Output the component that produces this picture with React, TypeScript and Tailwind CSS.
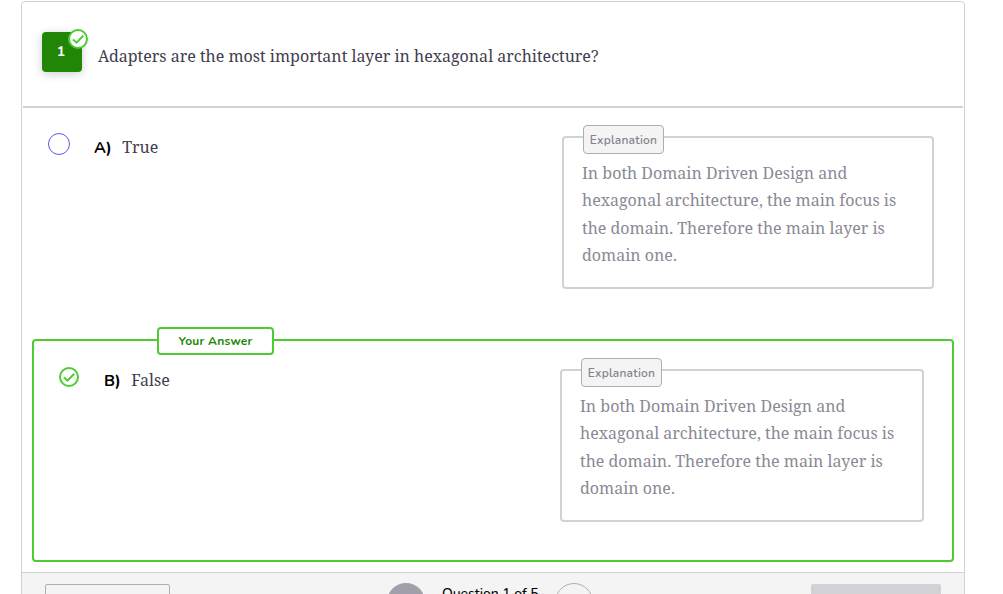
import React from "react";

const serif = "font-['Noto_Serif','DejaVu_Serif_Condensed','DejaVu_Serif',serif]";
const sans = "font-['Nunito','Noto_Sans',sans-serif]";

const explanationLines = [
  "In both Domain Driven Design and",
  "hexagonal architecture, the main focus is",
  "the domain. Therefore the main layer is",
  "domain one.",
];

function CheckCircle({ className }: { className: string }) {
  return (
    <svg viewBox="0 0 20 20" className={className} fill="none" stroke="#4dcb30">
      <circle cx="10" cy="10" r="9" fill="#fff" strokeWidth="2" />
      <path d="M5 10.6 8.5 13.7 15.2 6.8" strokeWidth="2" />
    </svg>
  );
}

function Explanation({ className }: { className: string }) {
  return (
    <div className={`relative h-[153px] shrink-0 rounded-[4px] border-2 border-[#d1d1d6] pt-[22px] pl-[18px] ${className}`}>
      <div className={`absolute -top-[13px] left-[19px] flex h-[29px] w-[81px] items-center justify-center rounded-[4px] border border-[#aeaeb2] bg-[#f4f4f4] text-[12px] leading-[18px] font-semibold tracking-[0.2px] whitespace-nowrap text-[#84828e] ${sans}`}>
        Explanation
      </div>
      {explanationLines.map((line) => (
        <p key={line} className={`text-[16px] leading-[27.3px] whitespace-nowrap text-[#8b8995] ${serif}`}>
          {line}
        </p>
      ))}
    </div>
  );
}

export default function App() {
  return (
    <div className="h-[594px] overflow-hidden bg-white pt-px pl-[21px]">
      <main className="h-[620px] w-[944px] rounded-[4px] border border-[#d1d1d6]">
        <header className="mx-px flex h-[106px] border-b-2 border-[#d1d1d6] pt-[30px] pl-[19px]">
          <div className={`relative flex h-10 w-10 shrink-0 items-center justify-center rounded-[4px] bg-[#218605] pr-[2px] text-[14px] leading-[20px] font-bold text-white shadow-[0_2px_10px_rgba(0,0,0,0.2)] ${sans}`}>
            1
            <CheckCircle className="absolute -top-[3px] left-[26px] h-5 w-5" />
          </div>
          <h1 className={`mt-[12px] ml-4 text-[16px] leading-6 font-normal whitespace-nowrap text-[#3f3d4e] ${serif}`}>
            Adapters are the most important layer in hexagonal architecture?
          </h1>
        </header>

        <section className="flex h-[231px] pt-[28px] pr-[30px] pl-[26px]">
          <div className="-mt-[3px] h-[22px] w-[22px] shrink-0 rounded-full border border-[#5b57f5]" />
          <span className={`ml-6 text-[16px] leading-6 font-bold text-black ${sans}`}>A)</span>
          <span className={`-mt-px ml-[10.5px] text-[16px] leading-6 text-[#3f3d4e] ${serif}`}>True</span>
          <Explanation className="ml-auto w-[372px]" />
        </section>

        <section className="relative mx-[10px] flex h-[223px] rounded-[4px] border-2 border-[#4dcb30] pt-[28px] pr-7 pl-[25px]">
          <div className={`absolute -top-[14px] left-[123px] flex h-7 w-[117px] items-center justify-center rounded-[4px] border-2 border-[#4dcb30] bg-white text-[12px] leading-[18px] font-bold tracking-[0.25px] text-[#218605] ${sans}`}>
            Your Answer
          </div>
          <CheckCircle className="-mt-[2px] h-5 w-5 shrink-0" />
          <span className={`ml-[25px] text-[16px] leading-6 font-bold text-black ${sans}`}>B)</span>
          <span className={`-mt-px ml-[10.5px] text-[16px] leading-6 text-[#3f3d4e] ${serif}`}>False</span>
          <Explanation className="ml-auto w-[364px]" />
        </section>

        <footer className="mt-[10px] flex h-12 border-t border-[#d1d1d6] bg-[#f4f4f4] pt-[11px] pr-[23px] pl-[23px]">
          <div className="h-[38px] w-[125px] rounded-[2px] border border-[#aeaeb2]" />
          <div className="-mt-px ml-[217px] h-[38px] w-[38px] rounded-full bg-[#a1a0aa]" />
          <div className={`mt-px ml-[17px] w-[96px] text-[14px] leading-[18px] font-medium tracking-[-0.05px] whitespace-nowrap text-black ${sans}`}>
            Question 1 of 5
          </div>
          <div className="-mt-px ml-[17px] h-[38px] w-[38px] rounded-full border border-[#aeaeb2]" />
          <div className="ml-auto h-[38px] w-[130px] rounded-[2px] bg-[#d1d1d6]" />
        </footer>
      </main>
    </div>
  );
}
